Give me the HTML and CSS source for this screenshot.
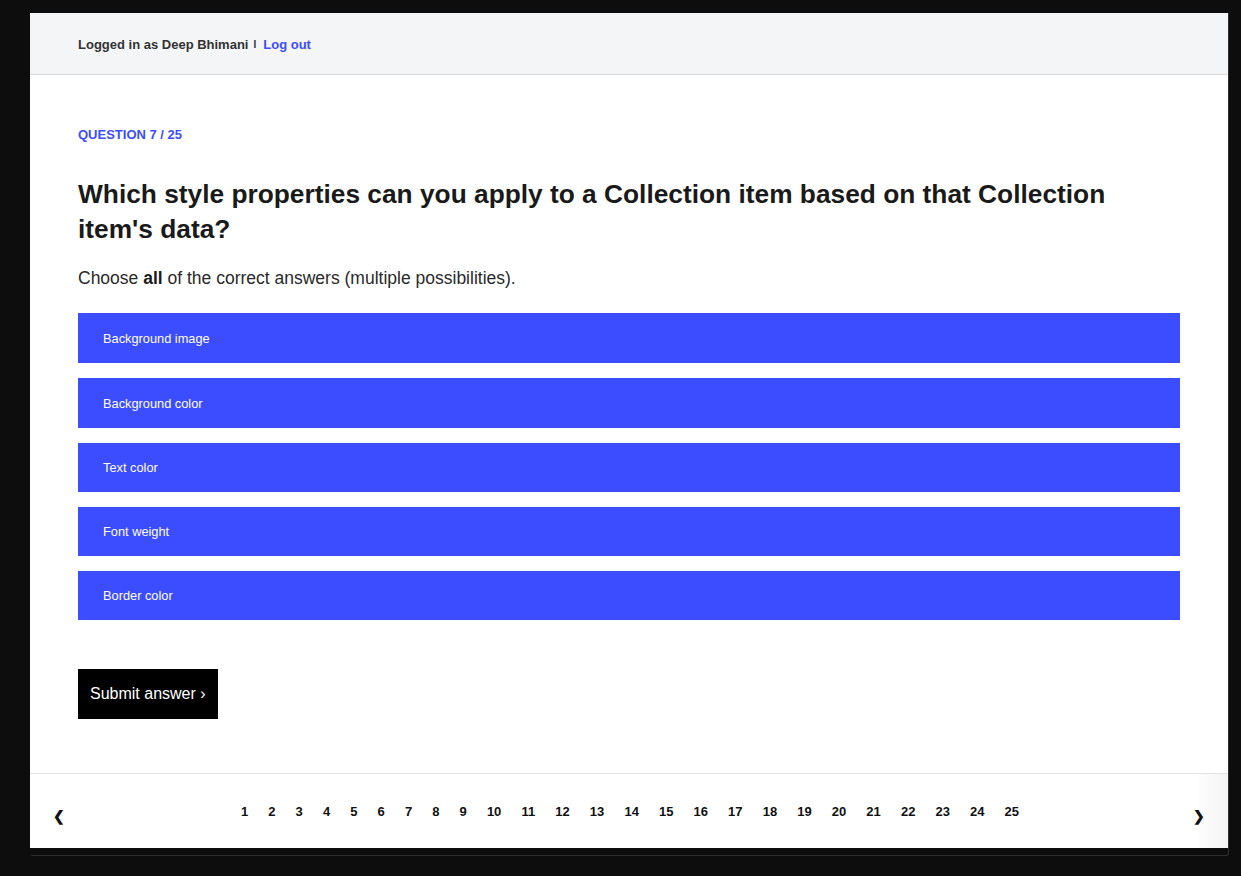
FILE: index.html
```html
<!DOCTYPE html>
<html>
<head>
<meta charset="utf-8">
<link rel="stylesheet" href="styles.css">
</head>
<body>
<div class="frame">
  <div class="panel">
    <header class="topbar">
      <span class="user">Logged in as Deep Bhimani</span>
      <span class="sep">I</span>
      <a class="logout" href="#">Log out</a>
    </header>
    <main class="content">
      <div class="qnum">QUESTION 7 / 25</div>
      <h1 class="title">Which style properties can you apply to a Collection item based on that Collection item's data?</h1>
      <p class="hint">Choose <b>all</b> of the correct answers (multiple possibilities).</p>
      <div class="options">
        <div class="option">Background image</div>
        <div class="option">Background color</div>
        <div class="option">Text color</div>
        <div class="option">Font weight</div>
        <div class="option">Border color</div>
      </div>
      <button class="submit">Submit answer ›</button>
    </main>
    <footer class="pager">
      <span class="arrow">❮</span>
      <div class="nums">
        <span>1</span><span>2</span><span>3</span><span>4</span><span>5</span><span>6</span><span>7</span><span>8</span><span>9</span><span>10</span><span>11</span><span>12</span><span>13</span><span>14</span><span>15</span><span>16</span><span>17</span><span>18</span><span>19</span><span>20</span><span>21</span><span>22</span><span>23</span><span>24</span><span>25</span>
      </div>
      <span class="arrow next">❯</span>
    </footer>
  </div>
</div>
</body>
</html>
```
FILE: styles.css
```css
html, body {
  margin: 0;
  padding: 0;
  background: #0d0d0d;
  font-family: "Liberation Sans", Arial, Helvetica, sans-serif;
}
body {
  padding: 13px 12px 0 30px;
  height: 876px;
  box-sizing: border-box;
}
.frame {
  width: 1199px;
  border: 1px solid #2e2e2e;
  border-top: none;
  border-left: none;
  border-radius: 0 0 3px 3px;
  padding-bottom: 7px;
  box-sizing: border-box;
}
.panel {
  background: #fff;
  width: 1198px;
}
.topbar {
  height: 62px;
  box-sizing: border-box;
  background: #f4f5f7;
  border-bottom: 1px solid #d9d9d9;
  display: flex;
  align-items: center;
  padding: 2px 48px 0 48px;
  font-size: 13px;
  font-weight: bold;
  color: #333;
}
.sep {
  font-size: 10px;
  margin: 0 7px 1px 5px;
  color: #333;
}
.logout {
  color: #3c4cff;
  text-decoration: none;
}
.content {
  padding: 53px 48px 54px 48px;
}
.qnum {
  color: #3c4cff;
  font-size: 13px;
  font-weight: bold;
  line-height: 14px;
}
.title {
  margin: 35px 0 0 0;
  font-size: 26.3px;
  line-height: 35px;
  color: #1a1a1a;
  font-weight: bold;
  max-width: 1080px;
}
.hint {
  margin: 20px 0 0 0;
  font-size: 17.5px;
  line-height: 22px;
  color: #2a2a2a;
}
.hint b {
  color: #1a1a1a;
}
.options {
  margin-top: 24px;
  display: flex;
  flex-direction: column;
  gap: 15px;
}
.option {
  background: #3c4cff;
  color: #fff;
  height: 50px;
  display: flex;
  align-items: center;
  padding-left: 25px;
  font-size: 12.8px;
}
.options .option:nth-child(3),
.options .option:nth-child(4),
.options .option:nth-child(5) {
  height: 49px;
}
.submit {
  margin-top: 49px;
  display: block;
  background: #000;
  color: #fff;
  border: none;
  height: 50px;
  padding: 0 12px;
  font-family: inherit;
  font-size: 16px;
  border-radius: 0;
}
.pager {
  border-top: 1px solid #e3e3e3;
  height: 74px;
  display: flex;
  align-items: center;
  justify-content: space-between;
  padding: 0 23px 0 23px;
  background: linear-gradient(to right, #fff 0, #fff 1165px, #f3f3f3 1198px);
}
.arrow {
  font-size: 14px;
  font-weight: bold;
  color: #111;
  margin-top: 9px;
  width: 12px;
  text-align: center;
}
.nums {
  display: flex;
  gap: 20.1px;
  font-size: 13px;
  font-weight: bold;
  color: #111;
  margin-left: 2px;
}
```
